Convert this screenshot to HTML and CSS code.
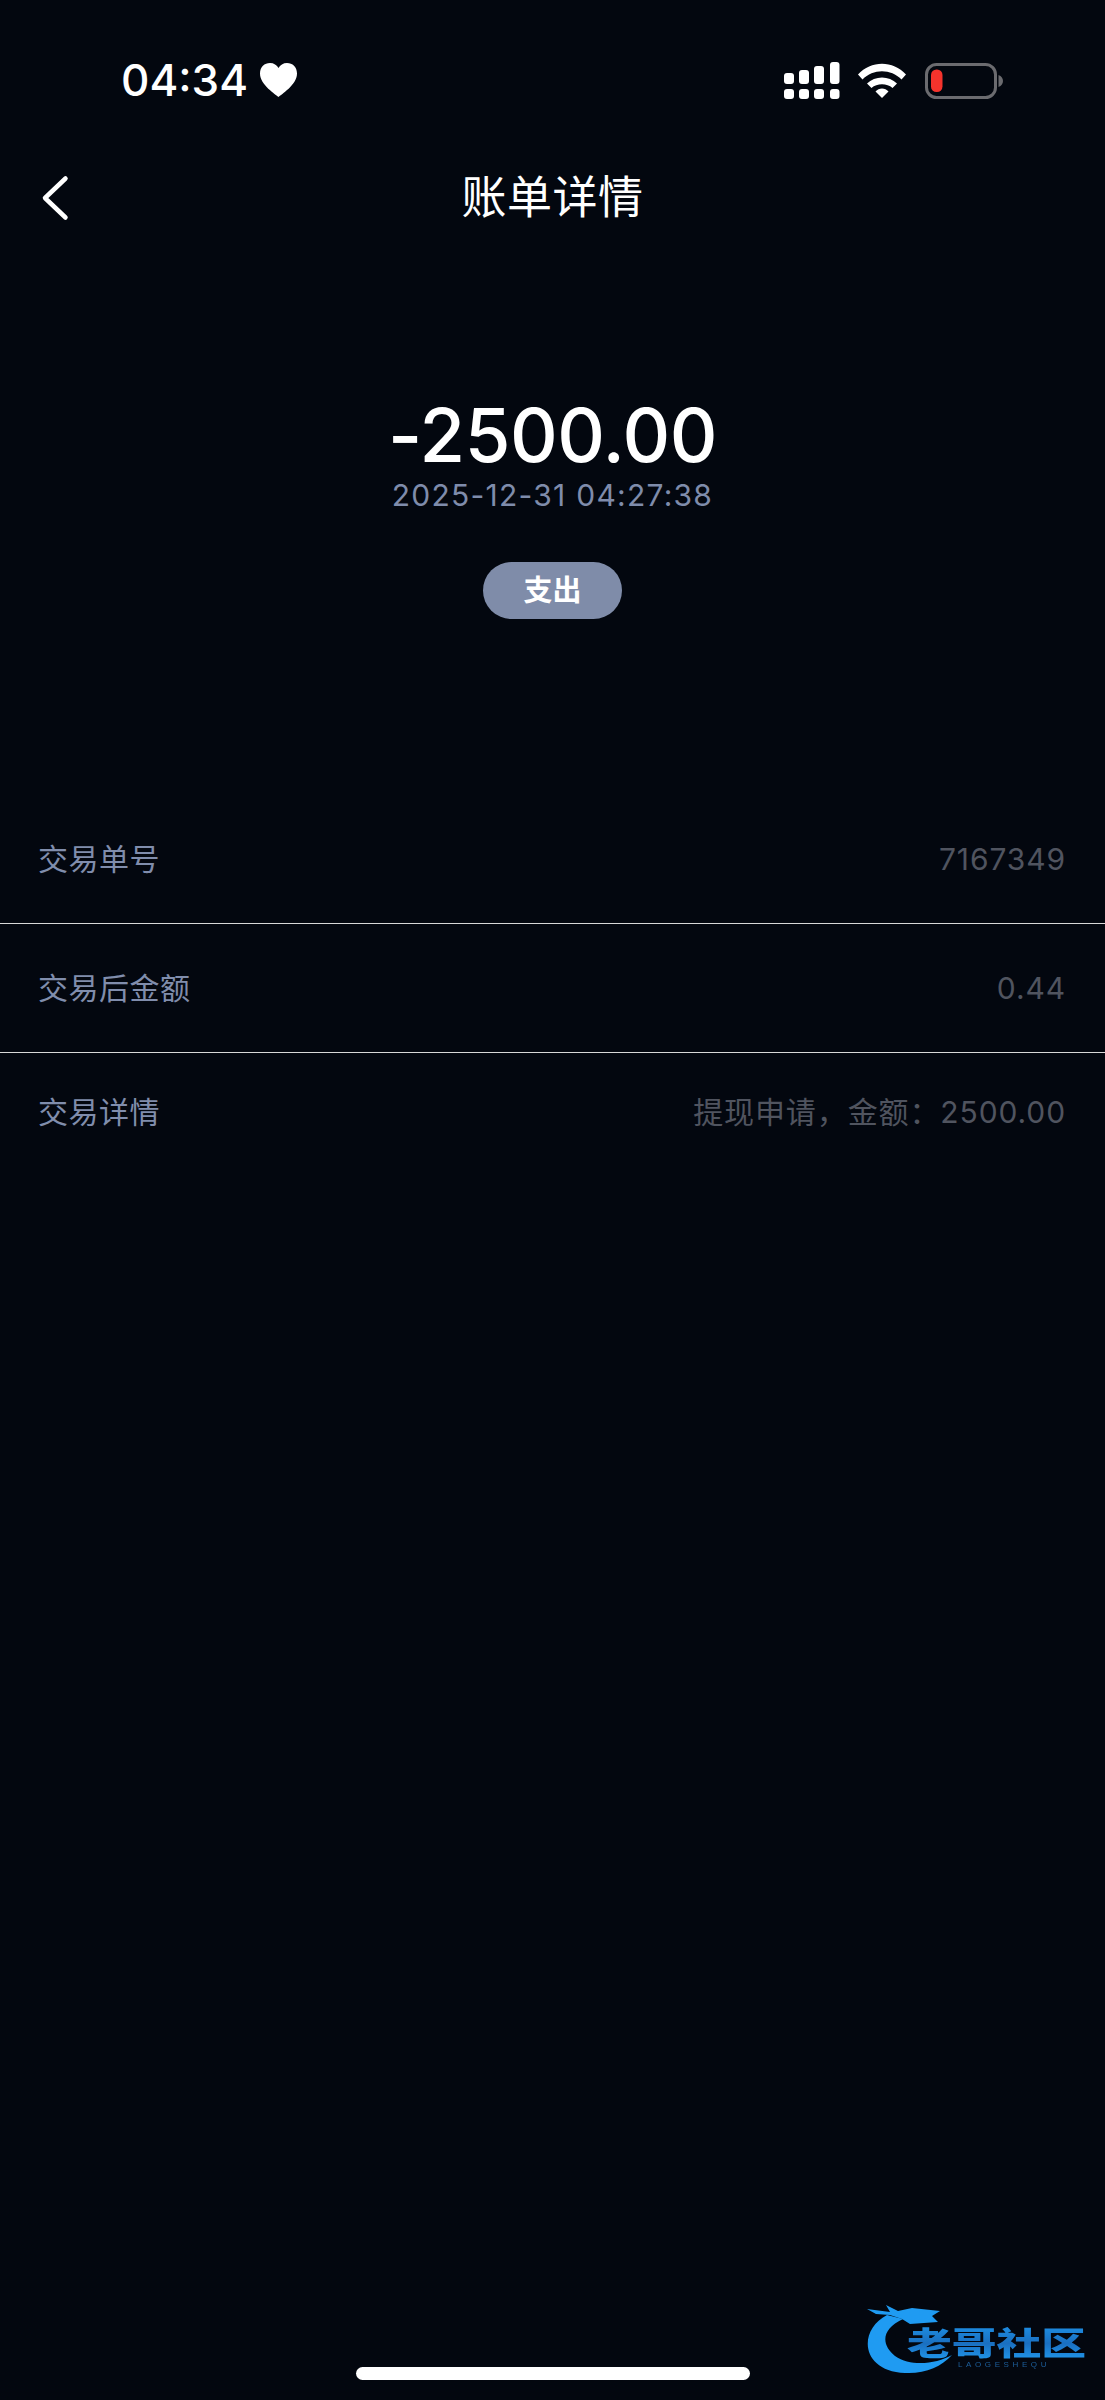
FILE: index.html
```html
<!DOCTYPE html>
<html lang="zh-CN">
<head>
<meta charset="utf-8">
<title>账单详情</title>
<link rel="stylesheet" href="styles.css">
</head>
<body>
<div class="page">
  <header class="status">
    <div class="status-left">
      <span class="time">04:34</span>
      <svg class="heart" viewBox="0 0 37 34" width="37" height="34"><path class="white" d="M18.500 34C16 31.500 0 22 0 10.500 0 4 4.500 0 10 0c3.800 0 6.900 2 8.500 5C20.100 2 23.200 0 27 0c5.500 0 10 4 10 10.500C37 22 21 31.500 18.500 34Z"/></svg>
    </div>
    <svg class="status-right" viewBox="784 60 220 40" width="220" height="40">
      <rect class="white" x="784" y="73" width="10" height="11" rx="3"/>
      <rect class="white" x="799" y="70" width="10" height="14" rx="3"/>
      <rect class="white" x="814" y="66" width="10" height="18" rx="3"/>
      <rect class="white" x="830" y="62" width="9.500" height="22" rx="3"/>
      <rect class="white" x="784" y="89" width="10" height="10" rx="3"/>
      <rect class="white" x="799" y="89" width="10" height="10" rx="3"/>
      <rect class="white" x="814" y="89" width="10" height="10" rx="3"/>
      <rect class="white" x="830" y="89" width="9.500" height="10" rx="3"/>
      <path class="white" d="M858 74.500C871 60 893 60 906 74.500L901.500 79.500C891 68.500 873 68.500 862.500 79.500Z"/>
      <path class="white" d="M867 83.500C875 75.500 889 75.500 897 83.500L892.500 88C887 83 877 83 871.500 88Z"/>
      <path class="white" d="M875.500 91.500C879 87.500 885 87.500 888.500 91.500L882 98Z"/>
      <rect class="batt-frame" x="926.500" y="64.500" width="69" height="33" rx="10"/>
      <rect class="batt-level" x="931" y="69.500" width="11.500" height="22.500" rx="5.500"/>
      <path class="batt-tip" d="M998.500 75C1001.500 76 1003 78.500 1003 81S1001.500 86 998.500 87Z"/>
    </svg>
  </header>

  <nav class="navbar">
    <svg class="back" viewBox="0 0 30 48" width="30" height="48"><path class="back-line" d="M24.500 4.500 4 24 24.500 43.500"/></svg>
    <h1 class="title">账单详情</h1>
  </nav>

  <section class="summary">
    <div class="amount">-2500.00</div>
    <div class="date">2025-12-31 04:27:38</div>
    <div class="badge">支出</div>
  </section>

  <section class="details">
    <div class="row row-first"><span class="label">交易单号</span><span class="value">7167349</span></div>
    <div class="row row-second"><span class="label">交易后金额</span><span class="value">0.44</span></div>
    <div class="row row-last"><span class="label">交易详情</span><span class="value">提现申请，金额：2500.00</span></div>
  </section>

  <div class="home-bar"></div>

  <svg class="watermark" viewBox="0 0 265 120" width="265" height="120">
    <defs>
      <linearGradient id="wm" x1="0" y1="0" x2="0" y2="1">
        <stop offset="0" stop-color="#1f9bf2"/>
        <stop offset="0.55" stop-color="#1a6fc0"/>
        <stop offset="1" stop-color="#22a0f5"/>
      </linearGradient>
    </defs>
    <path class="wm-blue" d="M47 35C18 50 20 91 65 93 85 94 101 87 112 75 96 84 71 87 55 76 41 65 41 49 63 39Z"/>
    <path class="wm-blue" d="M27 29 50 32 46 25 58 31 72 28 100 31 92 36 98 42 70 44 62 39 50 35 36 34Z"/>
    <text class="wm-title" transform="translate(67 75) scale(1.400 1)" fill="url(#wm)">老哥社区</text>
    <text class="wm-sub" x="118" y="87">LAOGESHEQU</text>
  </svg>
</div>
</body>
</html>
```
FILE: styles.css
```css
* { box-sizing: border-box; }
html, body { margin: 0; padding: 0; background: #03070f; }
body { font-family: Inter, "Noto Sans CJK SC", sans-serif; color: #fff; }
.page {
  position: relative;
  width: 1105px;
  height: 2400px;
  display: flex;
  flex-direction: column;
  overflow: hidden;
}
.white { fill: #fff; }

.status {
  height: 100px;
  padding: 60px 101px 0 121px;
  display: flex;
  justify-content: space-between;
  align-items: flex-start;
}
.status-left { display: flex; align-items: center; gap: 12px; height: 40px; }
.time { font-size: 44px; font-weight: 500; line-height: 40px; }
.heart { display: block; }
.status-right { display: block; }
.batt-frame { fill: none; stroke: #6b6b6f; stroke-width: 3px; }
.batt-level { fill: #f5332c; }
.batt-tip { fill: #6b6b6f; }

.navbar {
  position: relative;
  height: 195px;
  display: flex;
  align-items: center;
  justify-content: center;
}
.back { position: absolute; left: 41px; top: 74px; }
.back-line { fill: none; stroke: #fff; stroke-width: 4.500; stroke-linecap: round; stroke-linejoin: round; }
.title { margin: 0; font-size: 45px; letter-spacing: 0.500px; font-weight: 400; line-height: 60px; }

.summary {
  margin-top: 98px;
  display: flex;
  flex-direction: column;
  align-items: center;
}
.amount { font-size: 74px; letter-spacing: -0.500px; font-weight: 500; line-height: 84px; }
.date { font-size: 30px; letter-spacing: 1.250px; line-height: 40px; color: #7f8cab; margin-top: -2px; }
.badge {
  margin-top: 47px;
  width: 139px;
  height: 57px;
  border-radius: 29px;
  background: #7f8ca9;
  font-size: 29px;
  font-weight: 700;
  line-height: 57px;
  text-align: center;
}

.details { margin-top: 176px; }
.row {
  padding: 0 39px 0 38px;
  display: flex;
  justify-content: space-between;
  align-items: center;
  font-size: 30px;
  line-height: 44px;
}
.row-first { height: 129px; border-bottom: 1px solid #d8d8d8; }
.row-second { height: 129px; border-bottom: 1px solid #d8d8d8; }
.row-last { height: 118px; }
.label { color: #808dac; letter-spacing: 0.500px; }
.value { color: #50545f; letter-spacing: 0.900px; }

.home-bar {
  margin: auto auto 20px;
  width: 394px;
  height: 13px;
  border-radius: 7px;
  background: #fff;
}

.watermark { position: absolute; left: 840px; top: 2280px; filter: blur(0.6px); }
.wm-blue { fill: #1f9bf2; }
.wm-title { font-family: "Noto Sans CJK SC", sans-serif; font-size: 32px; font-weight: 900; }
.wm-sub { font-family: "Liberation Sans", sans-serif; font-size: 8px; letter-spacing: 3.600px; fill: #1d5f9c; }
```
